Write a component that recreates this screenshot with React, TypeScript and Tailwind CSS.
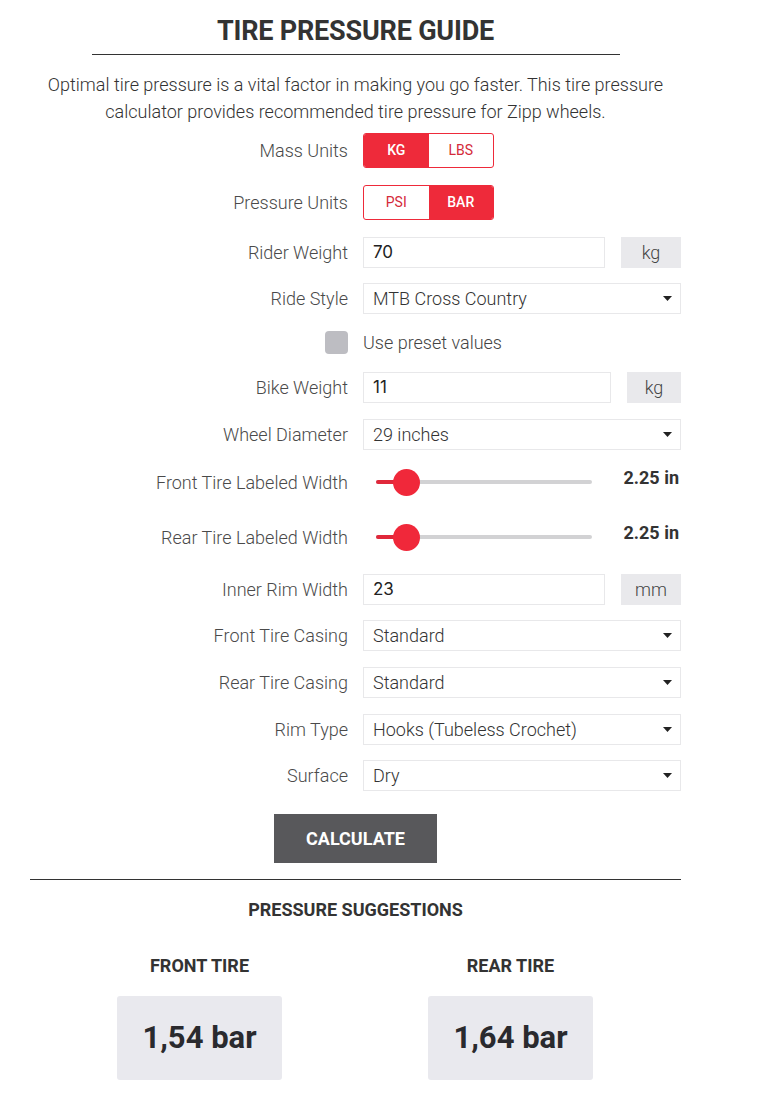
import { useState } from "react";

const font = "font-['Roboto',sans-serif]";

const Caret = () => (
  <svg width="9" height="5" viewBox="0 0 9 5" className="shrink-0">
    <path d="M0 0h9L4.5 5z" fill="#222" />
  </svg>
);

const Label = ({ text }: { text: string }) => (
  <div className="w-[318px] shrink-0 text-right text-[18px] font-light text-[#4a4a4a]">{text}</div>
);

const Row = ({ label, h, mt, children }: { label: string; h: string; mt: string; children: React.ReactNode }) => (
  <div className={`flex items-center gap-[15px] ${h} ${mt}`}>
    <Label text={label} />
    <div className="w-[318px] h-full flex items-center">{children}</div>
  </div>
);

const Toggle = ({ left, right, active }: { left: string; right: string; active: 0 | 1 }) => (
  <div className="flex h-full w-[131px] rounded-[3px] border border-[#ee2a3a] overflow-hidden text-[14px]">
    <div className={active === 0 ? "flex-1 flex items-center justify-center bg-[#ee2a3a] text-white font-medium" : "flex-1 flex items-center justify-center text-[#d42a3a]"}>
      {left}
    </div>
    <div className={active === 1 ? "flex-1 flex items-center justify-center bg-[#ee2a3a] text-white font-medium" : "flex-1 flex items-center justify-center text-[#d42a3a]"}>
      {right}
    </div>
  </div>
);

const NumberInput = ({ value, unit, w }: { value: string; unit: string; w: string }) => (
  <div className="flex h-full w-full items-stretch justify-between">
    <div className={`${w} h-full border border-[#e8e8ea] flex items-center px-[9px] text-[17px] text-[#222] font-['Inter',sans-serif]`}>
      {value}
    </div>
    <div className="flex-1 ml-[16px] bg-[#e9e9ec] flex items-center justify-center text-[18px] text-[#444] font-light">
      {unit}
    </div>
  </div>
);

const Select = ({ value }: { value: string }) => (
  <div className="h-full w-full border border-[#e8e8ea] flex items-center justify-between pl-[9px] pr-[8px] text-[18px] font-light text-[#333]">
    <span>{value}</span>
    <Caret />
  </div>
);

const Slider = ({ value }: { value: string }) => (
  <div className="flex w-full items-center justify-between">
    <div className="relative ml-[13px] w-[216px] h-[4px] rounded-full bg-[#d2d2d4]">
      <div className="absolute left-0 top-0 h-[4px] w-[30px] rounded-l-full bg-[#e0283a]" />
      <div className="absolute left-[17px] top-[-11.5px] w-[27px] h-[27px] rounded-full bg-[#f0283a]" />
    </div>
    <div className="mr-[2px] mb-[10px] text-[18px] font-bold text-[#333]">{value}</div>
  </div>
);

export default function App() {
  const [preset, setPreset] = useState(false);

  return (
    <div className={`${font} bg-white w-[770px] min-h-[1120px] text-[#333]`}>
      <div className="w-[651px] ml-[30px] flex flex-col items-center">
        <h1 className="mt-[15px] text-[27px] leading-[32px] font-bold text-[#333] tracking-[-0.2px]">TIRE PRESSURE GUIDE</h1>
        <div className="mt-[7px] w-[528px] h-px bg-[#333]" />
        <p className="mt-[16px] w-[660px] text-center text-[18px] leading-[27px] font-light text-[#333]">
          Optimal tire pressure is a vital factor in making you go faster. This tire pressure calculator provides recommended tire pressure for Zipp wheels.
        </p>
      </div>

      <div className="ml-[30px] w-[651px] flex flex-col">
        <Row label="Mass Units" h="h-[35px]" mt="mt-[8px]">
          <Toggle left="KG" right="LBS" active={0} />
        </Row>
        <Row label="Pressure Units" h="h-[35px]" mt="mt-[17px]">
          <Toggle left="PSI" right="BAR" active={1} />
        </Row>
        <Row label="Rider Weight" h="h-[31px]" mt="mt-[17px]">
          <NumberInput value="70" unit="kg" w="w-[242px]" />
        </Row>
        <Row label="Ride Style" h="h-[31px]" mt="mt-[15px]">
          <Select value="MTB Cross Country" />
        </Row>
        <div className="flex items-center gap-[15px] h-[23px] mt-[17px]">
          <div className="w-[318px] flex justify-end">
            <button
              onClick={() => setPreset(!preset)}
              className="w-[23px] h-[23px] rounded-[4px] bg-[#bdbdc2]"
            />
          </div>
          <div className="text-[18px] font-light text-[#444]">Use preset values</div>
        </div>
        <Row label="Bike Weight" h="h-[31px]" mt="mt-[18px]">
          <NumberInput value="11" unit="kg" w="w-[248px]" />
        </Row>
        <Row label="Wheel Diameter" h="h-[31px]" mt="mt-[16px]">
          <Select value="29 inches" />
        </Row>
        <Row label="Front Tire Labeled Width" h="h-[32px]" mt="mt-[16px]">
          <Slider value="2.25 in" />
        </Row>
        <Row label="Rear Tire Labeled Width" h="h-[32px]" mt="mt-[23px]">
          <Slider value="2.25 in" />
        </Row>
        <Row label="Inner Rim Width" h="h-[31px]" mt="mt-[21px]">
          <NumberInput value="23" unit="mm" w="w-[242px]" />
        </Row>
        <Row label="Front Tire Casing" h="h-[31px]" mt="mt-[15px]">
          <Select value="Standard" />
        </Row>
        <Row label="Rear Tire Casing" h="h-[31px]" mt="mt-[16px]">
          <Select value="Standard" />
        </Row>
        <Row label="Rim Type" h="h-[31px]" mt="mt-[16px]">
          <Select value="Hooks (Tubeless Crochet)" />
        </Row>
        <Row label="Surface" h="h-[31px]" mt="mt-[15px]">
          <Select value="Dry" />
        </Row>

        <div className="flex justify-center mt-[23px]">
          <button className="w-[163px] h-[49px] bg-[#58585b] text-white text-[18px] font-bold">CALCULATE</button>
        </div>

        <div className="mt-[16px] h-px w-full bg-[#333]" />

        <div className="mt-[16px] text-center text-[18px] font-bold text-[#333]">PRESSURE SUGGESTIONS</div>

        <div className="mt-[29px] ml-[14px] w-[622px] grid grid-cols-2">
          <div className="flex flex-col items-center">
            <div className="text-[18px] font-bold text-[#333]">FRONT TIRE</div>
            <div className="mt-[17px] w-[165px] h-[84px] rounded-[3px] bg-[#e9e9ee] flex items-center justify-center text-[31px] font-bold text-[#2a2a2e]">
              1,54 bar
            </div>
          </div>
          <div className="flex flex-col items-center">
            <div className="text-[18px] font-bold text-[#333]">REAR TIRE</div>
            <div className="mt-[17px] w-[165px] h-[84px] rounded-[3px] bg-[#e9e9ee] flex items-center justify-center text-[31px] font-bold text-[#2a2a2e]">
              1,64 bar
            </div>
          </div>
        </div>
      </div>
    </div>
  );
}
